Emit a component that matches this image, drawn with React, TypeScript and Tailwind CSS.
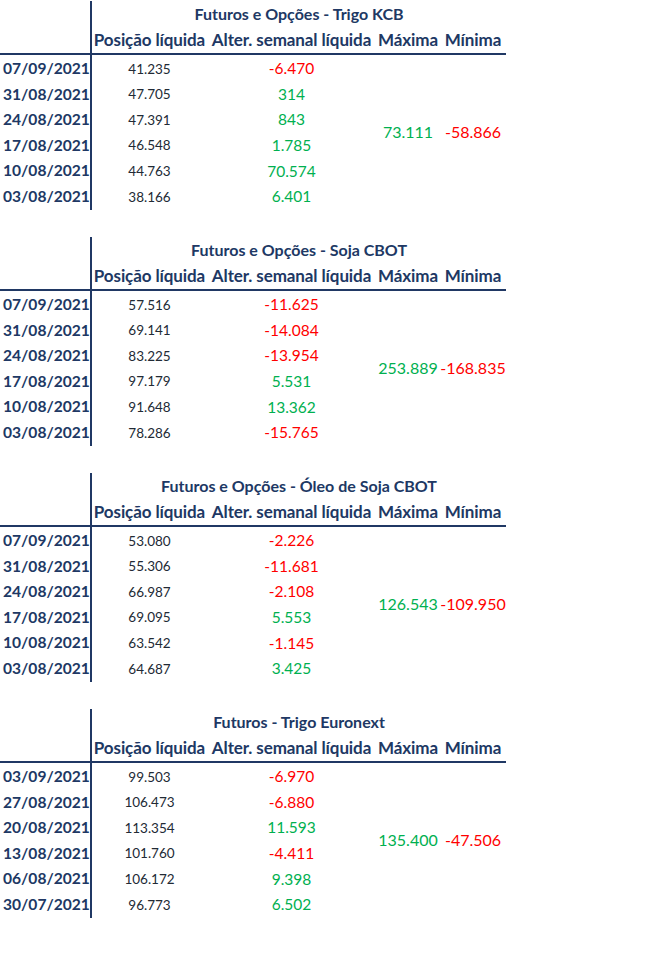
import React from "react";

type Row = { date: string; pos: string; chg: string };
type Block = { title: string; rows: Row[]; max: string; min: string };

const blocks: Block[] = [
  {
    title: "Futuros e Opções - Trigo KCB",
    max: "73.111",
    min: "-58.866",
    rows: [
      { date: "07/09/2021", pos: "41.235", chg: "-6.470" },
      { date: "31/08/2021", pos: "47.705", chg: "314" },
      { date: "24/08/2021", pos: "47.391", chg: "843" },
      { date: "17/08/2021", pos: "46.548", chg: "1.785" },
      { date: "10/08/2021", pos: "44.763", chg: "70.574" },
      { date: "03/08/2021", pos: "38.166", chg: "6.401" },
    ],
  },
  {
    title: "Futuros e Opções - Soja CBOT",
    max: "253.889",
    min: "-168.835",
    rows: [
      { date: "07/09/2021", pos: "57.516", chg: "-11.625" },
      { date: "31/08/2021", pos: "69.141", chg: "-14.084" },
      { date: "24/08/2021", pos: "83.225", chg: "-13.954" },
      { date: "17/08/2021", pos: "97.179", chg: "5.531" },
      { date: "10/08/2021", pos: "91.648", chg: "13.362" },
      { date: "03/08/2021", pos: "78.286", chg: "-15.765" },
    ],
  },
  {
    title: "Futuros e Opções - Óleo de Soja CBOT",
    max: "126.543",
    min: "-109.950",
    rows: [
      { date: "07/09/2021", pos: "53.080", chg: "-2.226" },
      { date: "31/08/2021", pos: "55.306", chg: "-11.681" },
      { date: "24/08/2021", pos: "66.987", chg: "-2.108" },
      { date: "17/08/2021", pos: "69.095", chg: "5.553" },
      { date: "10/08/2021", pos: "63.542", chg: "-1.145" },
      { date: "03/08/2021", pos: "64.687", chg: "3.425" },
    ],
  },
  {
    title: "Futuros - Trigo Euronext",
    max: "135.400",
    min: "-47.506",
    rows: [
      { date: "03/09/2021", pos: "99.503", chg: "-6.970" },
      { date: "27/08/2021", pos: "106.473", chg: "-6.880" },
      { date: "20/08/2021", pos: "113.354", chg: "11.593" },
      { date: "13/08/2021", pos: "101.760", chg: "-4.411" },
      { date: "06/08/2021", pos: "106.172", chg: "9.398" },
      { date: "30/07/2021", pos: "96.773", chg: "6.502" },
    ],
  },
];

// red for negatives, green otherwise
const tone = (v: string) => (v.startsWith("-") ? "text-[#ff0000]" : "text-[#00b050]");

function CotTable({ block }: { block: Block }) {
  return (
    <div className="w-[506px] h-[236px]">
      {/* Title + column headers */}
      <div className="flex">
        <div className="w-[92px] h-[52px] border-r-2 border-[#203864]" />
        <div className="flex flex-col font-bold text-[#203864]">
          <div className="h-[26px] flex items-center justify-center text-[16px] pb-[1px]">{block.title}</div>
          <div className="h-[26px] flex items-center whitespace-nowrap text-[17px] tracking-[-0.1px]">
            <span className="w-[115px] text-center">Posição líquida</span>
            <span className="w-[169px] text-center">Alter. semanal líquida</span>
            <span className="w-[64px] text-center">Máxima</span>
            <span className="w-[66px] text-center">Mínima</span>
          </div>
        </div>
      </div>
      <div className="h-[2px] bg-[#203864]" />

      {/* Body */}
      <div className="flex">
        <div className="w-[92px] border-r-2 border-[#203864] pb-[1px]">
          {block.rows.map((r) => (
            <div key={r.date} className="h-[25.6px] flex items-center pt-[2px] pl-[3px] font-bold text-[15.6px] text-[#203864]">
              {r.date}
            </div>
          ))}
        </div>
        <div className="w-[115px]">
          {block.rows.map((r) => (
            <div key={r.date} className="h-[25.6px] flex items-center justify-center pt-[2px] text-[13.5px] text-[#222a35]">
              {r.pos}
            </div>
          ))}
        </div>
        <div className="w-[169px]">
          {block.rows.map((r) => (
            <div key={r.date} className={`h-[25.6px] flex items-center justify-center pt-[2px] text-[15.5px] ${tone(r.chg)}`}>
              {r.chg}
            </div>
          ))}
        </div>
        <div className="w-[64px] flex items-center justify-center text-[16px] text-[#00b050]">{block.max}</div>
        <div className="w-[66px] flex items-center justify-center text-[16px] text-[#ff0000]">{block.min}</div>
      </div>
    </div>
  );
}

export default function App() {
  return (
    <div className="w-[663px] h-[953px] bg-white pt-[1px] font-['Lato',sans-serif]">
      {blocks.map((b) => (
        <CotTable key={b.title} block={b} />
      ))}
    </div>
  );
}
